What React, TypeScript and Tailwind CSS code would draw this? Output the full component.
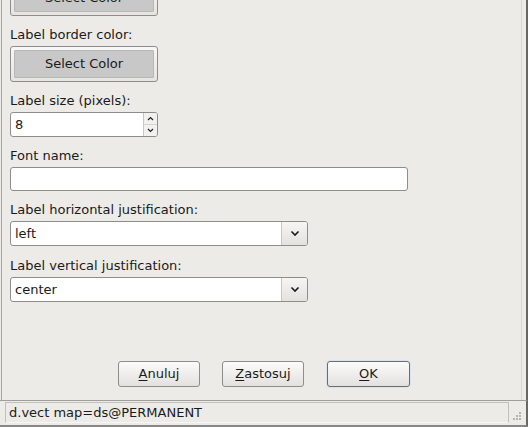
import React from "react";

const font = { fontFamily: '"DejaVu Sans", "Liberation Sans", sans-serif' };

function ColorButton() {
  return (
    <div className="w-[148px] h-[36px] rounded-[3px] border border-[#8f8d8b] bg-gradient-to-b from-[#f8f7f6] to-[#e6e4e1] p-[3px]">
      <div className="h-full rounded-[1px] border border-[#b7b7b7] bg-[#c8c8c8] flex items-center justify-center text-[13px] text-[#1a1a1a]">
        Select Color
      </div>
    </div>
  );
}

function Label({ children }: { children: React.ReactNode }) {
  return <div className="text-[13px] leading-[16px] text-[#1a1a1a] mb-[3px]">{children}</div>;
}

function SpinBox({ value }: { value: string }) {
  return (
    <div className="w-[148px] h-[25px] flex rounded-[3px] border border-[#8f8d8b] bg-white overflow-hidden">
      <div className="flex-1 px-[4px] flex items-center text-[13px] text-[#1a1a1a]">{value}</div>
      <div className="w-[14px] border-l border-[#c9c7c4] bg-[#f2f1f0] flex flex-col">
        <div className="flex-1 flex items-center justify-center border-b border-[#d6d4d1]">
          <svg width="7" height="5" viewBox="0 0 7 5">
            <path d="M1 4 L3.5 1.5 L6 4" fill="none" stroke="#222" strokeWidth="1.2" />
          </svg>
        </div>
        <div className="flex-1 flex items-center justify-center">
          <svg width="7" height="5" viewBox="0 0 7 5">
            <path d="M1 1 L3.5 3.5 L6 1" fill="none" stroke="#222" strokeWidth="1.2" />
          </svg>
        </div>
      </div>
    </div>
  );
}

function Combo({ value }: { value: string }) {
  return (
    <div className="w-[298px] h-[25px] flex rounded-[3px] border border-[#8f8d8b] bg-white overflow-hidden">
      <div className="flex-1 px-[4px] flex items-center text-[13px] text-[#1a1a1a]">{value}</div>
      <div className="w-[26px] border-l border-[#c9c7c4] bg-gradient-to-b from-[#f6f5f4] to-[#e4e2df] flex items-center justify-center">
        <svg width="10" height="7" viewBox="0 0 10 7">
          <path d="M1.5 1.5 L5 5 L8.5 1.5" fill="none" stroke="#1a1a1a" strokeWidth="1.6" />
        </svg>
      </div>
    </div>
  );
}

function DialogButton({ first, rest, isDefault }: { first: string; rest: string; isDefault?: boolean }) {
  return (
    <button
      className={
        "h-[26px] rounded-[3px] bg-gradient-to-b from-[#fbfbfa] to-[#e3e1de] text-[13px] text-[#1a1a1a] flex items-center justify-center " +
        (isDefault
          ? "w-[83px] ml-[1px] border border-[#6f6d6b] shadow-[0_0_0_1px_#d8e3ee]"
          : "w-[82px] border border-[#8f8d8b]")
      }
    >
      <span className="underline underline-offset-2">{first}</span>
      {rest}
    </button>
  );
}

export default function App() {
  return (
    <div style={font} className="w-[528px] h-[427px] bg-[#edebe8] flex flex-col overflow-hidden">
      <div className="flex-1 flex border-r-[2px] border-r-[#6a6866]">
        <div className="flex-1 ml-[1px] border-l border-l-[#a8a6a3] pl-[8px] mr-[4px] border-r border-r-[#d8d6d3] flex flex-col">
          <div className="mt-[-20px]">
            <ColorButton />
          </div>
          <div className="mt-[11px]">
            <Label>Label border color:</Label>
            <ColorButton />
          </div>
          <div className="mt-[11px]">
            <Label>Label size (pixels):</Label>
            <SpinBox value="8" />
          </div>
          <div className="mt-[11px]">
            <Label>Font name:</Label>
            <div className="w-[398px] h-[24px] rounded-[3px] border border-[#8f8d8b] bg-white" />
          </div>
          <div className="mt-[11px]">
            <Label>Label horizontal justification:</Label>
            <Combo value="left" />
          </div>
          <div className="mt-[12px]">
            <Label>Label vertical justification:</Label>
            <Combo value="center" />
          </div>
          <div className="mt-[59px] flex gap-[22px] pl-[108px]">
            <DialogButton first="A" rest="nuluj" />
            <DialogButton first="Z" rest="astosuj" />
            <DialogButton first="O" rest="K" isDefault />
          </div>
        </div>
      </div>
      <div className="h-[27px] border-t border-[#a09e9b] border-r-[2px] border-r-[#6a6866] border-b-[2px] border-b-[#8a8886] flex items-start pt-[1px]">
        <div className="flex-1 h-[21px] ml-[5px] border border-[#c2c0bd] border-b-[#f7f6f5] flex items-center pl-[3px] text-[13px] text-[#1a1a1a]">
          d.vect map=ds@PERMANENT
        </div>
        <div className="w-[17px] h-[21px] flex items-end justify-end pr-[4px] pb-[2px]">
          <svg width="10" height="12" viewBox="0 0 10 12">
            {[0, 1, 2].map((r) =>
              [0, 1, 2].map((c) =>
                c >= 2 - r ? <rect key={`${r}-${c}`} x={c * 3 + 1} y={r * 3 + 3} width="2" height="2" fill="#b5b3b0" /> : null
              )
            )}
          </svg>
        </div>
      </div>
    </div>
  );
}
